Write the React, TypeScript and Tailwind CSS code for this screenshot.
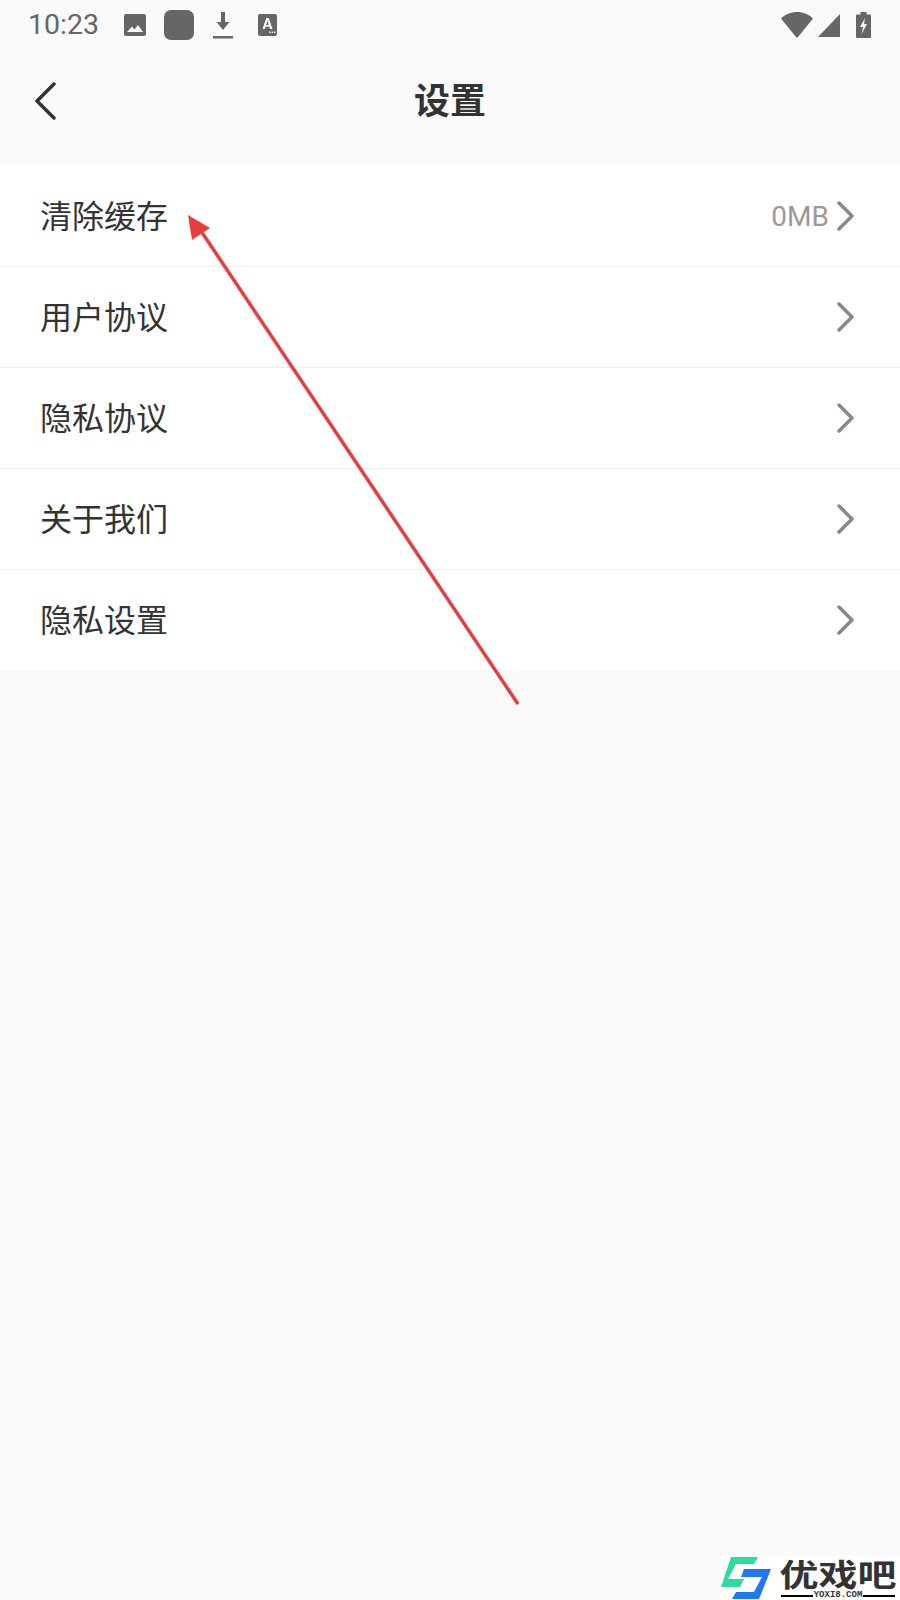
const rows = [
  { label: '清除缓存', value: '0MB' },
  { label: '用户协议' },
  { label: '隐私协议' },
  { label: '关于我们' },
  { label: '隐私设置' },
];

function StatusBar() {
  return (
    <div className="flex h-[50px] items-center pl-[28px] pr-[29px] text-[#666666]">
      <span className="w-[70px] text-[28.5px] leading-none font-['Roboto',sans-serif]">10:23</span>
      <svg className="ml-[25px] h-[24px] w-[24px]" viewBox="0 0 24 24">
        <path fill="#666666" fillRule="evenodd" d="M3 1h18a2 2 0 0 1 2 2v18a2 2 0 0 1-2 2H3a2 2 0 0 1-2-2V3a2 2 0 0 1 2-2zM4 19h16l-5-7-3.500 4.500L9 13.500z" />
      </svg>
      <div className="ml-[17px] h-[30px] w-[30px] rounded-[7px] bg-[#666666]" />
      <svg className="ml-[19px] h-[27px] w-[20px]" viewBox="0 0 20 27">
        <path fill="#666666" d="M8 0h4v10h4.500L10 18 3.500 10H8zM0 24h20v2.500H0z" />
      </svg>
      <svg className="ml-[25px] h-[22px] w-[19px]" viewBox="0 0 19 22">
        <path fill="#666666" fillRule="evenodd" d="M2 0h15a2 2 0 0 1 2 2v18a2 2 0 0 1-2 2H2a2 2 0 0 1-2-2V2a2 2 0 0 1 2-2zM8.300 4 4.500 15h2.300l.7-2.200h3.900l.7 2.200h2.400L10.700 4zM9.500 6.800l1.300 4.200H8.200zM11 17.500h1.500V19H11zM13.500 17.500H15V19h-1.500zM16 17.500h1.500V19H16z" />
      </svg>
      <div className="flex-1" />
      <svg className="h-[26px] w-[32px]" viewBox="0 0 32 26">
        <path fill="#666666" d="M0 6.500C4 2.500 10 0 16 0s12 2.500 16 6.500L17 25a1.300 1.300 0 0 1-2 0z" />
      </svg>
      <svg className="ml-[5px] h-[23px] w-[23px]" viewBox="0 0 23 23">
        <path fill="#666666" d="M22 0v23H0z" />
      </svg>
      <svg className="ml-[15px] h-[26px] w-[15px]" viewBox="0 0 15 26">
        <path fill="#666666" fillRule="evenodd" d="M4.500 0h6v2.500H14a1 1 0 0 1 1 1V25a1 1 0 0 1-1 1H1a1 1 0 0 1-1-1V3.500a1 1 0 0 1 1-1h3.500zM9 6 4 15h3l-1.500 7L11 12H8z" />
      </svg>
    </div>
  );
}

function Chevron({ className, color, width }: { className: string; color: string; width: number }) {
  return (
    <svg className={className} viewBox="0 0 18 30" fill="none">
      <path d="M2 2l13 13L2 28" stroke={color} strokeWidth={width} strokeLinecap="round" strokeLinejoin="round" />
    </svg>
  );
}

function Watermark() {
  return (
    <div className="absolute bottom-0 right-0 flex h-[44px] w-[180px] items-start bg-white">
      <svg className="-ml-[1px] h-[44px] w-[54px] shrink-0" viewBox="0 0 54 44">
        <path fill="#2fdc9b" d="M12 1h27l-4 7H17L9 23h16l-4 8H2z" />
        <path fill="#2276f6" d="M25 13h27L40 43H13l4-7h18l8-15H22z" />
      </svg>
      <div className="ml-[5px] flex w-[120px] flex-col items-center">
        <span className="h-[32px] scale-y-[0.8] text-[39px] leading-[32px] font-bold text-[#333333] font-['Noto_Sans_CJK_SC',sans-serif]">优戏吧</span>
        <div className="mt-[3px] flex h-[9px] items-center">
          <div className="h-[2px] w-[32px] bg-black" />
          <span className="px-[1px] text-[9px] leading-[9px] font-bold text-[#333333] font-['Liberation_Mono',monospace]">YOXI8.COM</span>
          <div className="h-[2px] w-[32px] bg-black" />
        </div>
      </div>
    </div>
  );
}

export default function App() {
  return (
    <div className="relative h-[1600px] w-[900px] overflow-hidden bg-[#fafafa] font-['Roboto','Noto_Sans_CJK_SC',sans-serif]">
      <StatusBar />

      <div className="relative flex h-[102px] items-center justify-center pt-[2px]">
        <svg className="absolute left-[34px] top-[32px] h-[38px] w-[22px]" viewBox="0 0 22 38" fill="none">
          <path d="M20 2 3 19l17 17" stroke="#333333" strokeWidth="3.500" strokeLinecap="round" strokeLinejoin="round" />
        </svg>
        <h1 className="text-[36px] leading-none font-bold text-[#333333]">设置</h1>
      </div>

      <div className="mt-[14px] bg-white">
        {rows.map((row, index) => (
          <div
            key={row.label}
            className={
              index < rows.length - 1
                ? 'flex h-[101px] items-center border-b border-[#eeeeee] pl-10 pr-[45px]'
                : 'flex h-[100px] items-center pl-10 pr-[45px]'
            }
          >
            <span className="pt-[2px] text-[32px] leading-none text-[#333333]">{row.label}</span>
            <div className="flex-1" />
            {row.value && <span className="mr-[8px] pt-[2px] text-[28px] leading-none text-[#999999]">{row.value}</span>}
            <Chevron className="h-[30px] w-[18px]" color="#888888" width={3.5} />
          </div>
        ))}
      </div>

      <svg className="absolute left-0 top-0 h-[800px] w-[600px]" viewBox="0 0 600 800" fill="none">
        <path d="M518 704 199 228" stroke="#e53e3e" strokeWidth="3.500" />
        <path d="M188 215 192 240 210 228z" fill="#e53e3e" />
      </svg>

      <Watermark />
    </div>
  );
}
